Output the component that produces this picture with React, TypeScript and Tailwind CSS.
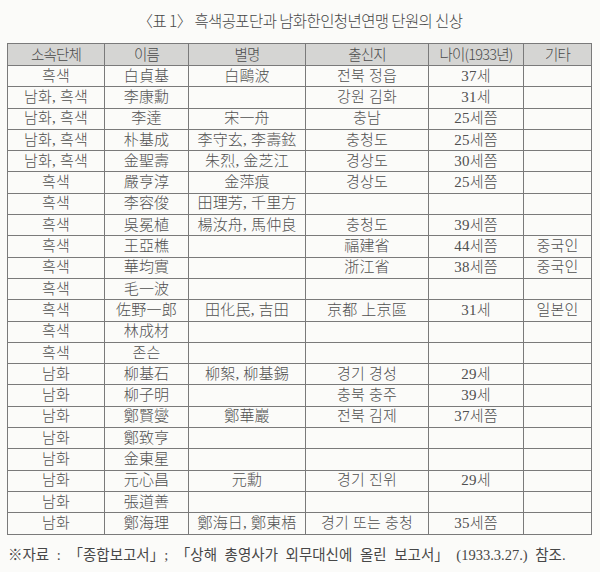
import React from "react";

type Row = [string, string, string, string, string, string];

const rows: Row[] = [
  ["흑색", "白貞基", "白鷗波", "전북 정읍", "37세", ""],
  ["남화, 흑색", "李康勳", "", "강원 김화", "31세", ""],
  ["남화, 흑색", "李達", "宋一舟", "충남", "25세쯤", ""],
  ["남화, 흑색", "朴基成", "李守玄, 李壽鉉", "충청도", "25세쯤", ""],
  ["남화, 흑색", "金聖壽", "朱烈, 金芝江", "경상도", "30세쯤", ""],
  ["흑색", "嚴亨淳", "金萍痕", "경상도", "25세쯤", ""],
  ["흑색", "李容俊", "田理芳, 千里方", "", "", ""],
  ["흑색", "吳冕植", "楊汝舟, 馬仲良", "충청도", "39세쯤", ""],
  ["흑색", "王亞樵", "", "福建省", "44세쯤", "중국인"],
  ["흑색", "華均實", "", "浙江省", "38세쯤", "중국인"],
  ["흑색", "毛一波", "", "", "", ""],
  ["흑색", "佐野一郎", "田化民, 吉田", "京都 上京區", "31세", "일본인"],
  ["흑색", "林成材", "", "", "", ""],
  ["흑색", "존슨", "", "", "", ""],
  ["남화", "柳基石", "柳絮, 柳基錫", "경기 경성", "29세", ""],
  ["남화", "柳子明", "", "충북 충주", "39세", ""],
  ["남화", "鄭賢燮", "鄭華巖", "전북 김제", "37세쯤", ""],
  ["남화", "鄭致亨", "", "", "", ""],
  ["남화", "金東星", "", "", "", ""],
  ["남화", "元心昌", "元勳", "경기 진위", "29세", ""],
  ["남화", "張道善", "", "", "", ""],
  ["남화", "鄭海理", "鄭海日, 鄭東梧", "경기 또는 충청", "35세쯤", ""],
];

const headers = ["소속단체", "이름", "별명", "출신지", "나이(1933년)", "기타"];

export default function App() {
  return (
    <div className="w-[600px] h-[572px] bg-[#fbfbf9] text-[#505050] font-['Liberation_Serif','Noto_Sans_CJK_KR',serif] overflow-hidden">
      <div className="h-[43px] flex items-center justify-center pb-[2px] text-[15.5px] tracking-[-0.6px] text-[#474747] font-['Noto_Sans_CJK_KR',sans-serif] font-light">
        〈표 1〉 흑색공포단과 남화한인청년연맹 단원의 신상
      </div>
      <table className="ml-[7px] w-[584px] table-fixed border-collapse border border-[#6f6f6f]">
        <colgroup>
          <col className="w-[97px]" />
          <col className="w-[84px]" />
          <col className="w-[117px]" />
          <col className="w-[123px]" />
          <col className="w-[95px]" />
          <col className="w-[68px]" />
        </colgroup>
        <thead>
          <tr className="h-[22px] bg-[#d5d5d3]">
            {headers.map((h) => (
              <th
                key={h}
                className="border border-[#7a7a7a] p-0 text-center text-[14.5px] font-light leading-none tracking-[-0.8px] text-[#4a4a4a] font-['Noto_Sans_CJK_KR',sans-serif]"
              >
                {h}
              </th>
            ))}
          </tr>
        </thead>
        <tbody>
          {rows.map((r, i) => (
            <tr key={i} className="h-[21.3px]">
              {r.map((c, j) => (
                <td
                  key={j}
                  className="border border-[#7a7a7a] p-0 text-center text-[15px] leading-none font-light tracking-[0.2px] whitespace-nowrap"
                >
                  {c}
                </td>
              ))}
            </tr>
          ))}
        </tbody>
      </table>
      <div className="mt-[10px] pl-[8px] text-[14.5px] [word-spacing:4px] text-[#474747] whitespace-nowrap">
        ※자료 : 「종합보고서」; 「상해 총영사가 외무대신에 올린 보고서」 (1933.3.27.) 참조.
      </div>
    </div>
  );
}
